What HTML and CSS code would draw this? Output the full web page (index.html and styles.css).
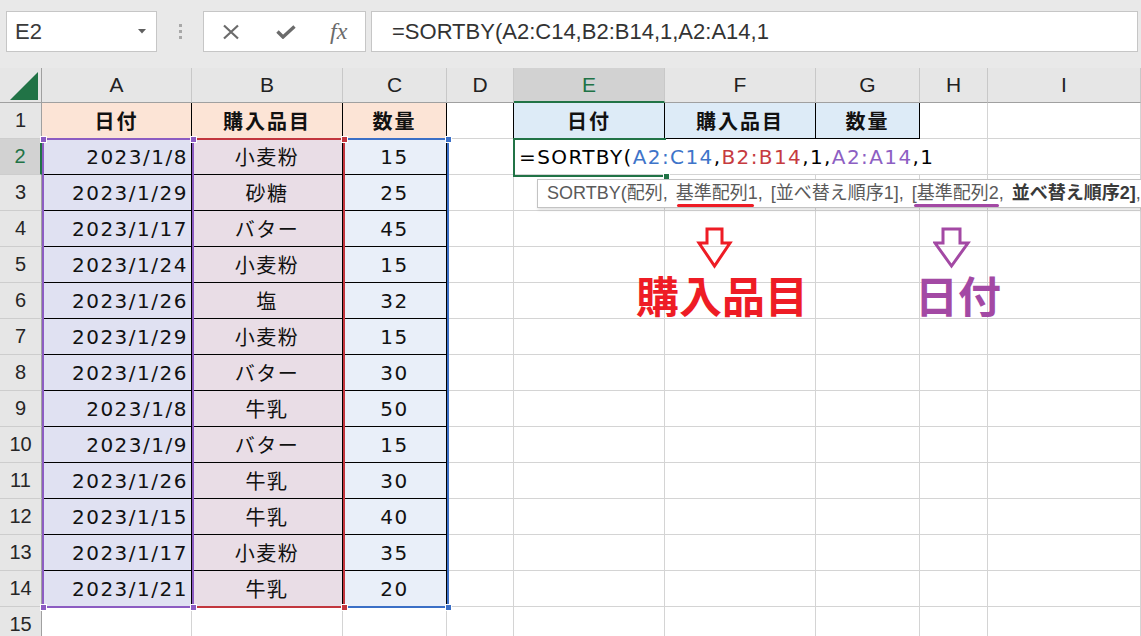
FILE: index.html
```html
<!DOCTYPE html>
<html lang="ja">
<head>
<meta charset="UTF-8" />
<title>SORTBY</title>
<link rel="stylesheet" href="styles.css">
</head>
<body>
<div class="app">
  <div class="toolbar">
    <div class="namebox">
      <span>E2</span>
      <svg width="8" height="5" viewBox="0 0 8 5"><path d="M0 0H8L4 4.5Z" fill="#5f5f5f"/></svg>
    </div>
    <div class="grip"><i></i><i></i><i></i></div>
    <div class="fxbox">
      <svg class="ic-x" width="18" height="16" viewBox="0 0 18 16"><path d="M2 1.5L16 14.5M16 1.5L2 14.5" stroke="#6b6b6b" stroke-width="2.2" fill="none"/></svg>
      <svg class="ic-ok" width="20" height="14" viewBox="0 0 20 14"><path d="M1.5 6.5L7 12L18.5 1.5" stroke="#6b6b6b" stroke-width="3.4" fill="none"/></svg>
      <span class="fx">fx</span>
    </div>
    <div class="fbar">=SORTBY(A2:C14,B2:B14,1,A2:A14,1</div>
  </div>

  <div class="sheet">
    <!-- column headers -->
    <div class="c corner"><svg width="28" height="28" viewBox="0 0 28 28"><path d="M28 0V28H0Z" fill="#217346"/></svg></div>
    <div class="c ch">A</div>
    <div class="c ch">B</div>
    <div class="c ch">C</div>
    <div class="c ch">D</div>
    <div class="c ch sel">E</div>
    <div class="c ch">F</div>
    <div class="c ch">G</div>
    <div class="c ch">H</div>
    <div class="c ch">I</div>

    <!-- row 1 -->
    <div class="c rh">1</div>
    <div class="c hd">日付</div>
    <div class="c hd">購入品目</div>
    <div class="c hd">数量</div>
    <div class="c d1"></div>
    <div class="c hd hd2">日付</div>
    <div class="c hd hd2">購入品目</div>
    <div class="c hd hd2">数量</div>
    <div class="c"></div>
    <div class="c"></div>

    <!-- row 2 -->
    <div class="c rh sel">2</div>
    <div class="c a">2023/1/8</div>
    <div class="c b">小麦粉</div>
    <div class="c q">15</div>
    <div class="c"></div>
    <div class="c fcell">=SORTBY(<span class="t-blue">A2:C14</span>,<span class="t-red">B2:B14</span>,1,<span class="t-purple">A2:A14</span>,1</div>
    <div class="c"></div>

    <div class="c rh">3</div>
    <div class="c a">2023/1/29</div>
    <div class="c b">砂糖</div>
    <div class="c q">25</div>
    <div class="c"></div><div class="c"></div><div class="c"></div><div class="c"></div><div class="c"></div><div class="c"></div>

    <div class="c rh">4</div>
    <div class="c a">2023/1/17</div>
    <div class="c b">バター</div>
    <div class="c q">45</div>
    <div class="c"></div><div class="c"></div><div class="c"></div><div class="c"></div><div class="c"></div><div class="c"></div>

    <div class="c rh">5</div>
    <div class="c a">2023/1/24</div>
    <div class="c b">小麦粉</div>
    <div class="c q">15</div>
    <div class="c"></div><div class="c"></div><div class="c"></div><div class="c"></div><div class="c"></div><div class="c"></div>

    <div class="c rh">6</div>
    <div class="c a">2023/1/26</div>
    <div class="c b">塩</div>
    <div class="c q">32</div>
    <div class="c"></div><div class="c"></div><div class="c"></div><div class="c"></div><div class="c"></div><div class="c"></div>

    <div class="c rh">7</div>
    <div class="c a">2023/1/29</div>
    <div class="c b">小麦粉</div>
    <div class="c q">15</div>
    <div class="c"></div><div class="c"></div><div class="c"></div><div class="c"></div><div class="c"></div><div class="c"></div>

    <div class="c rh">8</div>
    <div class="c a">2023/1/26</div>
    <div class="c b">バター</div>
    <div class="c q">30</div>
    <div class="c"></div><div class="c"></div><div class="c"></div><div class="c"></div><div class="c"></div><div class="c"></div>

    <div class="c rh">9</div>
    <div class="c a">2023/1/8</div>
    <div class="c b">牛乳</div>
    <div class="c q">50</div>
    <div class="c"></div><div class="c"></div><div class="c"></div><div class="c"></div><div class="c"></div><div class="c"></div>

    <div class="c rh">10</div>
    <div class="c a">2023/1/9</div>
    <div class="c b">バター</div>
    <div class="c q">15</div>
    <div class="c"></div><div class="c"></div><div class="c"></div><div class="c"></div><div class="c"></div><div class="c"></div>

    <div class="c rh">11</div>
    <div class="c a">2023/1/26</div>
    <div class="c b">牛乳</div>
    <div class="c q">30</div>
    <div class="c"></div><div class="c"></div><div class="c"></div><div class="c"></div><div class="c"></div><div class="c"></div>

    <div class="c rh">12</div>
    <div class="c a">2023/1/15</div>
    <div class="c b">牛乳</div>
    <div class="c q">40</div>
    <div class="c"></div><div class="c"></div><div class="c"></div><div class="c"></div><div class="c"></div><div class="c"></div>

    <div class="c rh">13</div>
    <div class="c a">2023/1/17</div>
    <div class="c b">小麦粉</div>
    <div class="c q">35</div>
    <div class="c"></div><div class="c"></div><div class="c"></div><div class="c"></div><div class="c"></div><div class="c"></div>

    <div class="c rh">14</div>
    <div class="c a">2023/1/21</div>
    <div class="c b">牛乳</div>
    <div class="c q">20</div>
    <div class="c"></div><div class="c"></div><div class="c"></div><div class="c"></div><div class="c"></div><div class="c"></div>

    <div class="c rh">15</div>
    <div class="c"></div><div class="c"></div><div class="c"></div><div class="c"></div><div class="c"></div>
    <div class="c"></div><div class="c"></div><div class="c"></div><div class="c"></div>
  </div>

  <!-- range highlights while editing -->
  <div class="rng rng-blue"></div>
  <div class="rng rng-red"></div>
  <div class="rng rng-purple"></div>
  <div class="hdl h-blue" style="left:445px; top:136px"></div>
  <div class="hdl h-blue" style="left:445px; top:604px"></div>
  <div class="hdl h-red" style="left:341px; top:136px"></div>
  <div class="hdl h-red" style="left:341px; top:604px"></div>
  <div class="hdl h-purple" style="left:40px; top:136px"></div>
  <div class="hdl h-purple" style="left:190px; top:136px"></div>
  <div class="hdl h-purple" style="left:40px; top:604px"></div>
  <div class="hdl h-purple" style="left:190px; top:604px"></div>

  <div class="active"></div>
  <div class="hdl h-green" style="left:663px; top:173px"></div>

  <div class="tip">SORTBY(配列, <span class="u u-red">基準配列1</span>, [並べ替え順序1], [<span class="u u-purple">基準配列2</span>, <b>並べ替え順序2]</b>,</div>

  <svg class="arrow arrow-red" width="40" height="44" viewBox="0 0 40 44"><path d="M12 3H27V17H35L19.5 40L4 17H12Z" fill="none" stroke="#ee1c25" stroke-width="3"/></svg>
  <svg class="arrow arrow-purple" width="40" height="44" viewBox="0 0 40 44"><path d="M10 3H27V17H35L18.5 40L2 17H10Z" fill="none" stroke="#a349a4" stroke-width="3"/></svg>

  <div class="note note-red">購入品目</div>
  <div class="note note-purple">日付</div>
</div>
</body>
</html>
```

FILE: styles.css
```css
body {
  margin: 0;
  background: #fff;
  overflow: hidden;
}
.app {
  position: relative;
  width: 1141px;
  height: 636px;
  overflow: hidden;
  font-family: "Liberation Sans", "Noto Sans CJK JP", sans-serif;
}

/* Formula bar */
.toolbar {
  height: 68px;
  background: #e9e9e9;
  display: flex;
  align-items: flex-start;
  padding: 11px 0 0 6px;
  box-sizing: border-box;
}
.namebox {
  width: 151px;
  height: 41px;
  box-sizing: border-box;
  border: 1px solid #c6c6c6;
  background: #fff;
  display: flex;
  align-items: center;
  justify-content: space-between;
  padding: 0 10px 0 8px;
  font-size: 22px;
  color: #3a3a3a;
}
.grip {
  width: 46px;
  height: 41px;
  display: flex;
  flex-direction: column;
  align-items: center;
  justify-content: center;
  gap: 3px;
}
.grip i {
  width: 3px;
  height: 3px;
  background: #a8a8a8;
}
.fxbox {
  width: 163px;
  height: 41px;
  box-sizing: border-box;
  border: 1px solid #c6c6c6;
  background: #fff;
  display: flex;
  align-items: center;
  padding-left: 18px;
}
.ic-ok { margin-left: 36px; }
.fx {
  margin-left: 34px;
  font-family: "Liberation Serif", serif;
  font-style: italic;
  font-size: 24px;
  color: #6b6b6b;
}
.fbar {
  flex: 1;
  margin: 0 3px 0 5px;
  height: 41px;
  box-sizing: border-box;
  border: 1px solid #c6c6c6;
  background: #fff;
  display: flex;
  align-items: center;
  padding-left: 20px;
  font-size: 22px;
  color: #333;
  white-space: nowrap;
}

/* Sheet grid */
.sheet {
  display: grid;
  grid-template-columns: 42px 150px 151px 104px 67px 151px 151px 104px 68px 153px;
  grid-template-rows: 35px;
  grid-auto-rows: 36px;
}
.c {
  box-sizing: border-box;
  border-right: 1px solid #d4d4d4;
  border-bottom: 1px solid #d4d4d4;
  display: flex;
  align-items: center;
  min-width: 0;
  white-space: nowrap;
  font-family: "DejaVu Sans", "Noto Sans CJK JP", sans-serif;
  font-size: 20px;
  letter-spacing: 1.5px;
  color: #111;
}
.corner {
  background: #e6e6e6;
  border-right-color: #a0a0a0;
  border-bottom-color: #a0a0a0;
  justify-content: flex-end;
  align-items: flex-end;
  padding: 0 3px 2px 0;
}
.ch {
  background: #e6e6e6;
  border-right-color: #c8c8c8;
  border-bottom-color: #a0a0a0;
  justify-content: center;
  font-family: "Liberation Sans", sans-serif;
  font-size: 21px;
  letter-spacing: 0;
  color: #222;
}
.ch.sel {
  background: #d2d2d2;
  color: #217346;
  border-bottom: 2px solid #217346;
}
.rh {
  background: #e6e6e6;
  border-right-color: #a0a0a0;
  border-bottom-color: #cdcdcd;
  justify-content: center;
  font-family: "Liberation Sans", sans-serif;
  font-size: 20px;
  letter-spacing: 0;
  color: #262626;
}
.rh.sel {
  background: #d2d2d2;
  color: #217346;
  border-right: 2px solid #217346;
}

/* Table */
.hd {
  background: #fce4d6;
  border-color: #000;
  justify-content: center;
  font-family: "Noto Sans CJK JP", sans-serif;
  font-weight: 700;
  letter-spacing: 2px;
}
.hd2 { background: #ddebf7; }
.d1 { border-right-color: #000; }
.a, .b, .q {
  border-right-color: #000;
  border-bottom-color: #000;
}
.a {
  background: #e0e1f2;
  justify-content: flex-end;
  padding-right: 3px;
}
.b {
  background: #e9dde6;
  justify-content: center;
}
.q {
  background: #e9eff9;
  justify-content: center;
}
.fcell {
  grid-column: span 4;
  padding-left: 5px;
  letter-spacing: 1.4px;
  color: #000;
}
.t-blue { color: #3e74c9; }
.t-red { color: #c63b3f; }
.t-purple { color: #8d5fc3; }

/* Editing overlays */
.rng {
  position: absolute;
  top: 138px;
  height: 470px;
  box-sizing: border-box;
  border: 2px solid;
}
.rng-blue { left: 42px; width: 407px; border-color: #3b6fc6; }
.rng-red { left: 192px; width: 153px; border-color: #c2363e; }
.rng-purple { left: 42px; width: 152px; border-color: #8c5cc2; }
.hdl {
  position: absolute;
  width: 7px;
  height: 7px;
  box-sizing: border-box;
  border: 1px solid #fff;
}
.h-blue { background: #3b6fc6; }
.h-red { background: #c2363e; }
.h-purple { background: #8c5cc2; }
.h-green { background: #217346; }
.active {
  position: absolute;
  left: 513px;
  top: 138px;
  width: 153px;
  height: 39px;
  box-sizing: border-box;
  border: 2px solid #217346;
  border-right: 0;
}

/* Function tooltip */
.tip {
  position: absolute;
  left: 537px;
  top: 179px;
  width: 640px;
  height: 29px;
  box-sizing: border-box;
  border: 1px solid #c3c3c3;
  background: #fff;
  box-shadow: 1px 2px 3px rgba(0, 0, 0, 0.12);
  padding-left: 9px;
  font-family: "Liberation Sans", "Noto Sans CJK JP", sans-serif;
  font-size: 18px;
  line-height: 27px;
  word-spacing: 3px;
  white-space: nowrap;
  color: #5a5a5a;
}
.tip b { color: #3a3a3a; }
.u {
  display: inline-block;
  position: relative;
}
.u::after {
  content: "";
  position: absolute;
  bottom: 0;
  height: 3px;
  border-radius: 2px;
}
.u-red::after { left: 1px; right: 4px; background: #ee1c25; }
.u-purple::after { left: -3px; right: 0; background: #a349a4; }

/* Hand-drawn notes */
.arrow { position: absolute; top: 226px; }
.arrow-red { left: 695px; }
.arrow-purple { left: 933px; }
.note {
  position: absolute;
  top: 273px;
  font-family: "Noto Sans CJK JP", sans-serif;
  font-weight: 700;
  font-size: 43px;
  line-height: 43px;
}
.note-red { left: 636px; color: #ee1c25; }
.note-purple { left: 915px; color: #a349a4; }
```
